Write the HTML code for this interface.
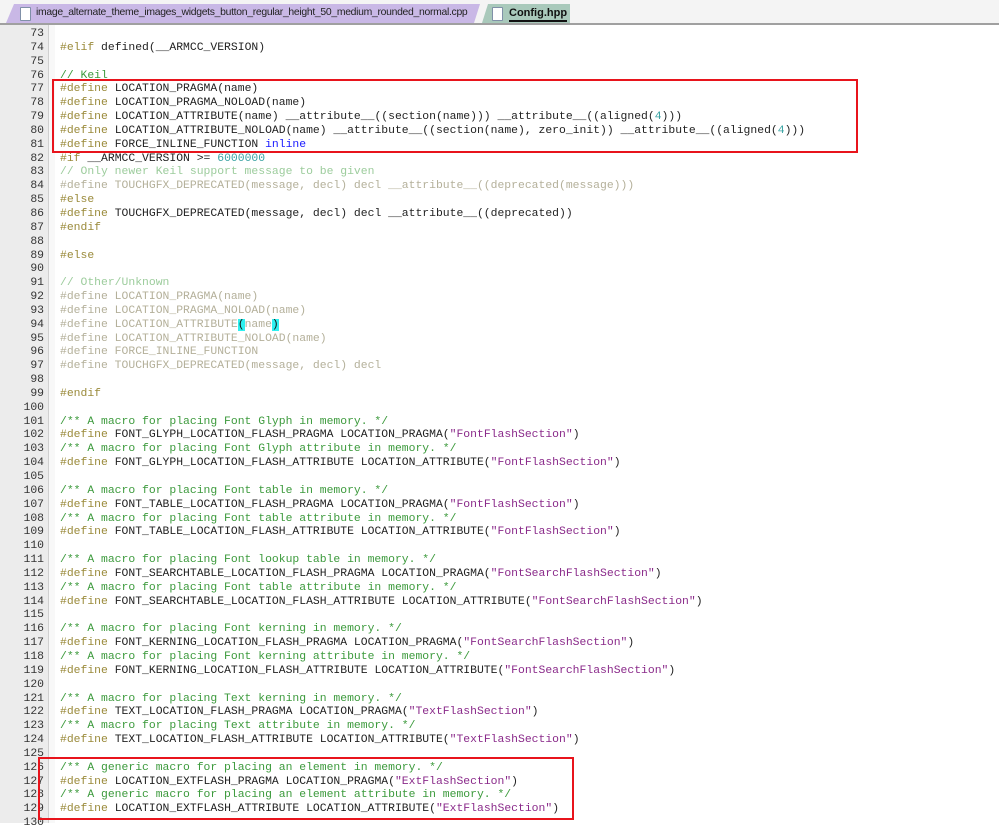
<!DOCTYPE html>
<html><head><meta charset="utf-8"><style>
html,body{margin:0;padding:0;width:999px;height:823px;overflow:hidden;background:#fff;font-family:"Liberation Mono",monospace}
.tabs{position:absolute;left:0;top:0;width:999px;height:23px;background:#f4f4f4;border-bottom:2px solid #a0a0a0}
.t1{position:absolute;left:6px;top:4px;width:474px;height:19px;background:#c9b8e6;font:10.4px "Liberation Sans",sans-serif;letter-spacing:-0.3px;color:#222;clip-path:polygon(0 100%,8px 0,100% 0,calc(100% - 6px) 100%)}
.t2{position:absolute;left:482px;top:4px;width:88px;height:19px;background:#a9c9bb;font:bold 11px "Liberation Sans",sans-serif;color:#111;clip-path:polygon(6px 0,100% 0,100% 100%,0 100%)}
.doc{position:absolute;top:3px;width:9px;height:12px;background:#fff;border:1px solid #8090a8;border-radius:1px}
.gut{position:absolute;left:0;top:25px;width:48px;height:798px;background:#ececec}
.fold{position:absolute;left:48px;top:25px;width:6px;height:798px;background:#f8f8f8;border-left:1px solid #d0d0d0}
pre{margin:0;position:absolute;top:28px;font-size:11.4px;line-height:13.84px;color:#222}
.ln{left:0;width:44px;text-align:right;color:#333}
.code{left:60px}
.d{color:#9a8a3a}.c{color:#3c9a3c}.s{color:#8a2a8a}.n{color:#3aa3a3}.k{color:#1a1aff}.g{color:#b4b09a}.gc{color:#9ccc9c}
.box{position:absolute;border:2px solid #e8141c}
.hl{background:#2ef0f0;color:#111}
</style></head><body>
<div class="tabs">
<div class="t1"><div class="doc" style="left:14px"></div><span style="position:absolute;left:30px;top:3px">image_alternate_theme_images_widgets_button_regular_height_50_medium_rounded_normal.cpp</span></div>
<div class="t2"><div class="doc" style="left:10px"></div><span style="position:absolute;left:27px;top:3px;border-bottom:2px solid #111;line-height:13px">Config.hpp</span></div>
</div>
<div class="gut"></div><div class="fold"></div>
<pre class="ln">73
74
75
76
77
78
79
80
81
82
83
84
85
86
87
88
89
90
91
92
93
94
95
96
97
98
99
100
101
102
103
104
105
106
107
108
109
110
111
112
113
114
115
116
117
118
119
120
121
122
123
124
125
126
127
128
129
130</pre>
<pre class="code">

<span class="d">#elif</span> defined(__ARMCC_VERSION)

<span class="c">// Keil</span>
<span class="d">#define</span> LOCATION_PRAGMA(name)
<span class="d">#define</span> LOCATION_PRAGMA_NOLOAD(name)
<span class="d">#define</span> LOCATION_ATTRIBUTE(name) __attribute__((section(name))) __attribute__((aligned(<span class="n">4</span>)))
<span class="d">#define</span> LOCATION_ATTRIBUTE_NOLOAD(name) __attribute__((section(name), zero_init)) __attribute__((aligned(<span class="n">4</span>)))
<span class="d">#define</span> FORCE_INLINE_FUNCTION <span class="k">inline</span>
<span class="d">#if</span> __ARMCC_VERSION &gt;= <span class="n">6000000</span>
<span class="gc">// Only newer Keil support message to be given</span>
<span class="g">#define TOUCHGFX_DEPRECATED(message, decl) decl __attribute__((deprecated(message)))</span>
<span class="d">#else</span>
<span class="d">#define</span> TOUCHGFX_DEPRECATED(message, decl) decl __attribute__((deprecated))
<span class="d">#endif</span>

<span class="d">#else</span>

<span class="gc">// Other/Unknown</span>
<span class="g">#define LOCATION_PRAGMA(name)</span>
<span class="g">#define LOCATION_PRAGMA_NOLOAD(name)</span>
<span class="g">#define LOCATION_ATTRIBUTE</span><span class="hl">(</span><span class="g">name</span><span class="hl">)</span>
<span class="g">#define LOCATION_ATTRIBUTE_NOLOAD(name)</span>
<span class="g">#define FORCE_INLINE_FUNCTION</span>
<span class="g">#define TOUCHGFX_DEPRECATED(message, decl) decl</span>

<span class="d">#endif</span>

<span class="c">/** A macro for placing Font Glyph in memory. */</span>
<span class="d">#define</span> FONT_GLYPH_LOCATION_FLASH_PRAGMA LOCATION_PRAGMA(<span class="s">"FontFlashSection"</span>)
<span class="c">/** A macro for placing Font Glyph attribute in memory. */</span>
<span class="d">#define</span> FONT_GLYPH_LOCATION_FLASH_ATTRIBUTE LOCATION_ATTRIBUTE(<span class="s">"FontFlashSection"</span>)

<span class="c">/** A macro for placing Font table in memory. */</span>
<span class="d">#define</span> FONT_TABLE_LOCATION_FLASH_PRAGMA LOCATION_PRAGMA(<span class="s">"FontFlashSection"</span>)
<span class="c">/** A macro for placing Font table attribute in memory. */</span>
<span class="d">#define</span> FONT_TABLE_LOCATION_FLASH_ATTRIBUTE LOCATION_ATTRIBUTE(<span class="s">"FontFlashSection"</span>)

<span class="c">/** A macro for placing Font lookup table in memory. */</span>
<span class="d">#define</span> FONT_SEARCHTABLE_LOCATION_FLASH_PRAGMA LOCATION_PRAGMA(<span class="s">"FontSearchFlashSection"</span>)
<span class="c">/** A macro for placing Font table attribute in memory. */</span>
<span class="d">#define</span> FONT_SEARCHTABLE_LOCATION_FLASH_ATTRIBUTE LOCATION_ATTRIBUTE(<span class="s">"FontSearchFlashSection"</span>)

<span class="c">/** A macro for placing Font kerning in memory. */</span>
<span class="d">#define</span> FONT_KERNING_LOCATION_FLASH_PRAGMA LOCATION_PRAGMA(<span class="s">"FontSearchFlashSection"</span>)
<span class="c">/** A macro for placing Font kerning attribute in memory. */</span>
<span class="d">#define</span> FONT_KERNING_LOCATION_FLASH_ATTRIBUTE LOCATION_ATTRIBUTE(<span class="s">"FontSearchFlashSection"</span>)

<span class="c">/** A macro for placing Text kerning in memory. */</span>
<span class="d">#define</span> TEXT_LOCATION_FLASH_PRAGMA LOCATION_PRAGMA(<span class="s">"TextFlashSection"</span>)
<span class="c">/** A macro for placing Text attribute in memory. */</span>
<span class="d">#define</span> TEXT_LOCATION_FLASH_ATTRIBUTE LOCATION_ATTRIBUTE(<span class="s">"TextFlashSection"</span>)

<span class="c">/** A generic macro for placing an element in memory. */</span>
<span class="d">#define</span> LOCATION_EXTFLASH_PRAGMA LOCATION_PRAGMA(<span class="s">"ExtFlashSection"</span>)
<span class="c">/** A generic macro for placing an element attribute in memory. */</span>
<span class="d">#define</span> LOCATION_EXTFLASH_ATTRIBUTE LOCATION_ATTRIBUTE(<span class="s">"ExtFlashSection"</span>)
</pre>
<div class="box" style="left:52px;top:79px;width:802px;height:70px"></div>
<div class="box" style="left:38px;top:757px;width:532px;height:59px"></div>
</body></html>
